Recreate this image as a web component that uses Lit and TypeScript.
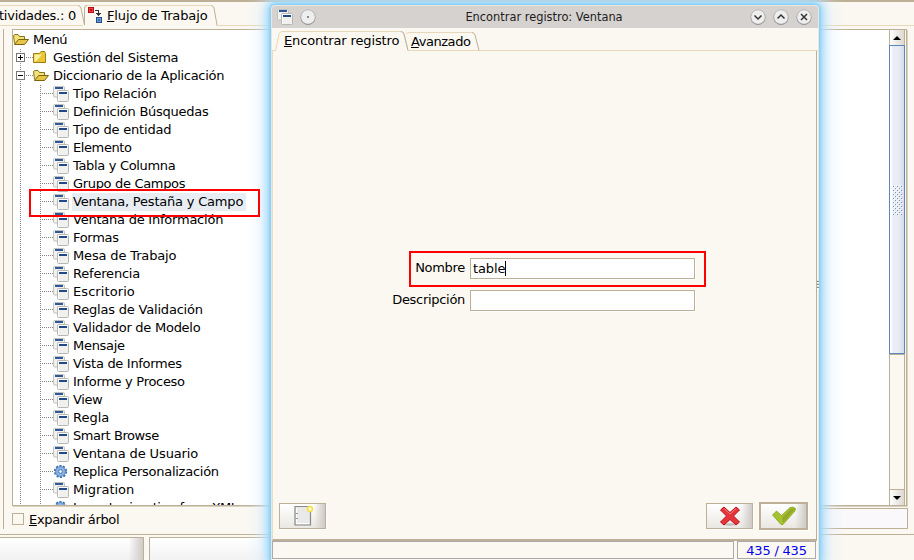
import { LitElement, html, css, svg } from "lit";
import { customElement } from "lit/decorators.js";

const windowIcon = html`<svg class="ico" width="16" height="16" viewBox="0 0 16 16">
  <rect x=".5" y=".5" width="11" height="10.500" rx="1" fill="#f1f1ef" stroke="#c2c2be"/><rect x="2" y="1" width="8" height="2" fill="#2e5796"/>
  <rect x="4.500" y="4.500" width="11" height="11" rx="1" fill="#f0f0ee" stroke="#b6b6b2"/><path d="M5.500 15V5.500H15" fill="none" stroke="#fff"/><rect x="6" y="6" width="8" height="2" fill="#204a87"/></svg>`;
const gearIcon = html`<svg class="ico" width="16" height="16" viewBox="0 0 16 16"><circle cx="7.5" cy="7.5" r="5.3" fill="none" stroke="#386fae" stroke-width="2.6" stroke-dasharray="2 1.33"/><circle cx="7.5" cy="7.5" r="4.9" fill="#8fb5e2" stroke="#5487c4"/><circle cx="7.5" cy="7.5" r="2" fill="#dce9f8" stroke="#4777b4"/></svg>`;
const openFolder = html`<svg class="ico" width="16" height="16" viewBox="0 0 16 16"><path d="M1.5 11.5L.5 3.5L2 2.5H5L6.5 4.500H11.500V7" fill="#f1e37a" stroke="#8b7118"/><path d="M1.500 12.500L5.500 7.500H15.500L11.500 12.500Z" fill="#e5c648" stroke="#80620c"/></svg>`;
const shutFolder = html`<svg class="ico" width="16" height="16" viewBox="0 0 16 16"><path d="M.5 3.500H6.500L8 1.500H11.500L12.500 3.500V12.500H.5Z" fill="#e9c832" stroke="#a17e13"/><path d="M1.500 11.500V4.500H9L3 11.500Z" fill="#fbf0a4"/></svg>`;

type Kind = "open" | "shut" | "window" | "gear";
interface Row { text: string; depth: number; kind: Kind; track: number; box?: string; sel?: boolean }
const leaf = (text: string, track: number, kind: Kind = "window", sel = false): Row => ({ text, depth: 2, kind, track, sel });
const rows: Row[] = [
  { text: "Menú", depth: 0, kind: "open", track: -0.4 },
  { text: "Gestión del Sistema", depth: 1, kind: "shut", box: "plus", track: -0.26 },
  { text: "Diccionario de la Aplicación", depth: 1, kind: "open", box: "minus", track: -0.29 },
  leaf("Tipo Relación", -0.23), leaf("Definición Búsquedas", -0.25), leaf("Tipo de entidad", -0.2),
  leaf("Elemento", -0.4), leaf("Tabla y Columna", -0.33), leaf("Grupo de Campos", -0.33),
  leaf("Ventana, Pestaña y Campo", -0.2, "window", true), leaf("Ventana de Información", -0.23),
  leaf("Formas", -0.3), leaf("Mesa de Trabajo", -0.15), leaf("Referencia", -0.2),
  leaf("Escritorio", 0.08), leaf("Reglas de Validación", -0.2), leaf("Validador de Modelo", -0.26),
  leaf("Mensaje", -0.28), leaf("Vista de Informes", -0.3), leaf("Informe y Proceso", -0.3),
  leaf("View", -0.4), leaf("Regla", 0), leaf("Smart Browse", -0.42), leaf("Ventana de Usuario", -0.12),
  leaf("Replica Personalización", -0.26, "gear"), leaf("Migration", 0), leaf("Import migration from XML", -0.45, "gear"),
];
const icons = { open: openFolder, shut: shutFolder, window: windowIcon, gear: gearIcon };

@customElement("menu-tree")
class MenuTree extends LitElement {
  static styles = css`
    :host { display: block; box-sizing: border-box; overflow: hidden; flex: 1; min-width: 0; height: 475px; padding-top: 1px; background: #fff; }
    .row { display: flex; height: 18px; align-items: center; white-space: nowrap; }
    .guide { width: 20px; height: 18px; flex: none; }
    .ico { flex: none; display: block; }
    .label { line-height: 18px; padding: 0 3px 0 1px; margin-left: 3px; }
    .sel { background: #e8edf4; }
  `;
  private trunk(row: Row) {
    if (row.depth === 0) return "";
    const node = row.depth === 1;
    return html`<svg class="guide" viewBox="0 0 20 18" shape-rendering="crispEdges">
      <path d="M7.500 0V18${node ? "M8.500 8.500H20" : ""}" fill="none" stroke="#858585" stroke-dasharray="1 1"/>
      ${node ? svg`<rect x="3.500" y="4.500" width="8" height="8" fill="#fff" stroke="#777"/><path d="M5 8.500H10${row.box === "plus" ? "M7.500 6V11" : ""}" stroke="#000"/>` : ""}</svg>
      ${node ? "" : html`<svg class="guide" viewBox="0 0 20 18" shape-rendering="crispEdges"><path d="M7.500 0V18M8.500 8.500H20" fill="none" stroke="#858585" stroke-dasharray="1 1"/></svg>`}`;
  }
  render() {
    return rows.map(r => html`<div class="row">${this.trunk(r)}${icons[r.kind]}<span class="label ${r.sel ? "sel" : ""}" style="letter-spacing:${r.track}px">${r.text}</span></div>`);
  }
}

@customElement("find-dialog")
class FindDialog extends LitElement {
  static styles = css`
    :host { display: flex; flex-direction: column; box-sizing: border-box; width: 548px; height: 556px; background: #fbf8f1; border: 1px solid #ece6df; border-width: 1px 1px 0; border-radius: 4px 4px 0 0; box-shadow: 0 0 3px 1px #7bcaf5, 0 0 10px 4px #94d6fa, 0 0 21px 7px #d9ecff; }
    .title { height: 22px; background: #d6d2d0; display: flex; align-items: center; padding: 0 6px 0 5px; border-radius: 3px 3px 0 0; }
    .name { flex: 1; text-align: center; font-size: 11.400px; color: #1c1c1c; padding-left: 29px; line-height: 20px; }
    .btn { width: 16px; height: 16px; margin-left: 7px; }
    .tabs { height: 23px; position: relative; display: flex; flex: none; }
    .line { position: absolute; left: 0; top: 0; }
    .tab { position: relative; line-height: 26px; padding-left: 12px; width: 115px; white-space: nowrap; letter-spacing: -.12px; }
    .second { line-height: 28px; letter-spacing: -.45px; }
    .body { flex: 1; border: 1px solid #bdb096; border-width: 0 1px 2px; border-left-color: #e8dcc2; margin-right: 1px; display: flex; flex-direction: column; }
    .fields { flex: 1; display: grid; grid-template-columns: 192px 225px; grid-auto-rows: 21px; row-gap: 11px; column-gap: 5px; padding-top: 207px; align-content: start; }
    .fl { text-align: right; line-height: 20px; letter-spacing: -.3px; }
    .in { box-sizing: border-box; border: 1px solid #bdb096; background: #fff; display: flex; align-items: center; padding-left: 2px; box-shadow: 1px 1px #fff; letter-spacing: -.1px; }
    .caret { width: 1px; height: 15px; background: #000; }
    .actions { display: flex; align-items: center; height: 30px; padding: 0 8px 8px 6px; gap: 4px; }
    .sp { flex: 1; }
    .push { box-sizing: border-box; width: 47px; height: 26px; border: 1px solid #bdb096; background: linear-gradient(90deg, #fff0 75%, #cecac7), linear-gradient(#fff, #ebe8e3); display: flex; align-items: center; justify-content: center; box-shadow: 1px 1px #fff; }
    .main { width: 49px; height: 28px; border-width: 2px; margin-left: 2px; }
    .status { display: flex; height: 20px; gap: 3px; padding-right: 2px; }
    .msg, .count { box-sizing: border-box; height: 18px; border: 1px solid #aaa; }
    .msg { flex: 1; } .count { width: 79px; color: #0000f0; text-align: center; line-height: 17px; letter-spacing: -.2px; }
  `;
  private round(mark: string) {
    return html`<svg class="btn" viewBox="0 0 16 16"><circle cx="8" cy="8.700" r="7.300" fill="#777"/><circle cx="8" cy="8" r="7.200" fill="#eee" stroke="#aaa" stroke-width=".7"/><path d=${mark} fill="none" stroke="#333" stroke-width="1.500"/></svg>`;
  }
  render() {
    return html`<div class="title">${windowIcon}${this.round("M7.300 8H8.700")}<span class="name">Encontrar registro: Ventana</span>${this.round("M4.500 6.500L8 10L11.500 6.500")}${this.round("M4.500 9.500L8 6L11.500 9.500")}${this.round("M5 5L11 11M11 5L5 11")}</div>
      <div class="tabs"><svg class="line" width="546" height="23" viewBox="0 0 546 23"><path d="M0 22.500H3.500L7 6Q8 3.500 10 3.500H129Q131 3.500 132 6L136 22.500H546M134 6Q135 4.500 137 4.500H200" fill="none" stroke="#e6d8b8"/><path d="M129 3.500Q131 3.500 132 6L136 22.500M200 4.500Q202 4.500 203 7L207 22.500" fill="none" stroke="#bdb096"/></svg>
        <span class="tab"><u>E</u>ncontrar registro</span><span class="tab second"><u>A</u>vanzado</span></div>
      <div class="body"><div class="fields"><span class="fl">Nombre</span><div class="in">table<i class="caret"></i></div><span class="fl">Descripción</span><div class="in"></div></div>
        <div class="actions"><div class="push"><svg width="22" height="22" viewBox="0 0 22 22"><path d="M3 1.500H18.500V20H3Z" fill="#e9e9e9" stroke="#858b85" stroke-width="1.200"/><path d="M4.500 3V18.500H17" fill="none" stroke="#fff"/><path d="M4 8.500H6M4 13.500H6" stroke="#999"/><circle cx="18" cy="4" r="2.500" fill="#fffbd0" stroke="#f3df4c" stroke-width="1.500"/></svg></div><span class="sp"></span>
          <div class="push"><svg width="22" height="20" viewBox="0 0 22 20"><ellipse cx="11" cy="18.500" rx="6" ry="1.200" fill="#aaa" opacity=".7"/><path d="M5 1L11 6.500L17 1L20.500 4L14.500 10L20.500 16L17 19L11 13.500L5 19L1.500 16L7.500 10L1.500 4Z" fill="#e5343a" stroke="#b90f17" stroke-linejoin="round"/><path d="M5 2.500L11 8L17 2.500" fill="none" stroke="#f28083"/></svg></div>
          <div class="push main"><svg width="24" height="20" viewBox="0 0 24 20"><path d="M.5 9L4.500 5L9.500 9.500L18 1.500Q21 0 23.500 2.500L23 5L11 18.500H9Z" fill="#a5c32d" stroke="#819e1b" stroke-width=".7"/><path d="M10 12L18 3.500Q20 2 23 3L11 17Z" fill="#8a9e27" opacity=".7"/></svg></div></div></div>
      <div class="status"><div class="msg"></div><div class="count">435 / 435</div></div>`;
  }
}

@customElement("app-root")
class AppRoot extends LitElement {
  static styles = css`
    :host { display: block; position: relative; width: 914px; height: 560px; overflow: hidden; background: #fbf8f1; font: 13px "DejaVu Sans", sans-serif; color: #000; }
    .top { box-sizing: border-box; height: 29px; position: relative; border-top: 2px solid #bdb096; display: flex; align-items: center; }
    .lines { position: absolute; left: 0; top: -2px; }
    .act { position: relative; width: 87px; text-indent: -1px; white-space: nowrap; letter-spacing: -.25px; }
    .flow { position: relative; margin-left: 4px; letter-spacing: -.13px; }
    .route { position: relative; width: 16px; height: 17px; }
    .middle { display: flex; height: 500px; }
    .rail { width: 3px; border-right: 1px solid #bdb096; margin-right: 8px; }
    .content { width: 895px; }
    .view { box-sizing: border-box; display: flex; height: 477px; border: 1px solid #bdb096; box-shadow: 1px 1px #d9d1c2; }
    .bar { width: 16px; margin-right: 1px; box-sizing: border-box; border: 1px solid #bdb096; border-width: 0 1px; display: flex; flex-direction: column; }
    .arrow { height: 15px; display: flex; align-items: center; justify-content: center; background: linear-gradient(90deg, #fff, #ddd8d0); }
    .thumb { height: 307px; margin: 0 -1px; border: 1px solid #5c86be; background: linear-gradient(90deg, #fff 1px, #eaedf6 3px, #e9edf5 60%, #d5dbe8); display: flex; align-items: center; justify-content: center; }
    .track { flex: 1; border-top: 1px solid #bdb096; border-bottom: 1px solid #bdb096; }
    .below { display: flex; align-items: center; height: 21px; margin-top: 2px; }
    .below span { letter-spacing: -.33px; line-height: 19px; padding-top: 1px; }
    .check { width: 10px; height: 10px; border: 1px solid #bdb096; margin-right: 5px; }
    .entry { margin-left: auto; margin-right: -1px; width: 560px; height: 19px; border: 1px solid #bdb096; background: #faf8fa; }
    .bottom { height: 26px; margin-top: 5px; border-top: 1px solid #bdb096; display: flex; gap: 5px; padding-top: 2px; }
    .slot { height: 30px; border: 1px solid #bdb096; border-left: 0; width: 143px; background: linear-gradient(90deg, #fff0 90%, #cecac7), linear-gradient(#fff, #eee 90%); }
    .wide { width: 140px; border-left: 1px solid #bdb096; border-right: 0; background: linear-gradient(#fff, #eee); }
    .dialog { position: absolute; left: 271px; top: 5px; }
    .grip { position: absolute; left: 817px; top: 280px; width: 2px; height: 9px; background: repeating-linear-gradient(#e8e4dc 0 1px, #8d8880 1px 2px, #fff 2px 3px); }
    .mark { position: absolute; box-sizing: border-box; border: 2px solid #f00; }
    .m1 { left: 29px; top: 189px; width: 231px; height: 28px; }
    .m2 { left: 409px; top: 251px; width: 297px; height: 36px; }
  `;
  render() {
    return html`<div class="top"><svg class="lines" width="914" height="29" viewBox="0 0 914 29"><path d="M0 5.500H78M0 25.500H83M86 5.500H211M216 25.500H914" fill="none" stroke="#e6d8b8"/><path d="M78 5.500Q80 5.500 81 8L84.500 25M84.500 25V8Q84.500 5.500 87 5.500M211 5.500Q213 5.500 214 8L217 25" fill="none" stroke="#bdb096"/></svg>
        <span class="act">tividades.: 0</span><svg class="route" viewBox="0 0 16 17" shape-rendering="crispEdges"><rect x="1.500" y=".5" width="5" height="5" fill="#e8444a" stroke="#b80c12"/><rect x="3" y="2" width="2" height="2" fill="#c00"/><path d="M8 3.500H11.500V8M9 6.500H14M10 7.500H13M11 8.500H12" fill="none" stroke="#333"/><rect x="9.500" y="10.500" width="5" height="5" fill="#6d9cd0" stroke="#264f87"/><rect x="11" y="12" width="2" height="2" fill="#3b6cab"/></svg><span class="flow"><u>F</u>lujo de Trabajo</span></div>
      <div class="middle"><div class="rail"></div><div class="content"><div class="view"><menu-tree></menu-tree>
        <div class="bar"><div class="arrow"><svg width="8" height="4" viewBox="0 0 8 4"><path d="M0 4L4 0L8 4Z"/></svg></div><div class="thumb"><svg width="11" height="30"><defs><pattern id="dots" width="4" height="4" patternUnits="userSpaceOnUse"><path d="M1 1h1v1h-1zM3 3h1v1h-1z" fill="#7f93b0"/><path d="M0 0h1v1h-1zM2 2h1v1h-1z" fill="#fff"/></pattern></defs><rect width="11" height="30" fill="url(#dots)"/></svg></div><div class="track"></div><div class="arrow"><svg width="8" height="4" viewBox="0 0 8 4"><path d="M0 0H8L4 4Z"/></svg></div></div></div>
        <div class="below"><i class="check"></i><span><u>E</u>xpandir árbol</span><div class="entry"></div></div></div></div>
      <div class="bottom"><div class="slot"></div><div class="slot wide"></div></div>
      <find-dialog class="dialog"></find-dialog><div class="grip"></div><div class="mark m1"></div><div class="mark m2"></div>`;
  }
}
